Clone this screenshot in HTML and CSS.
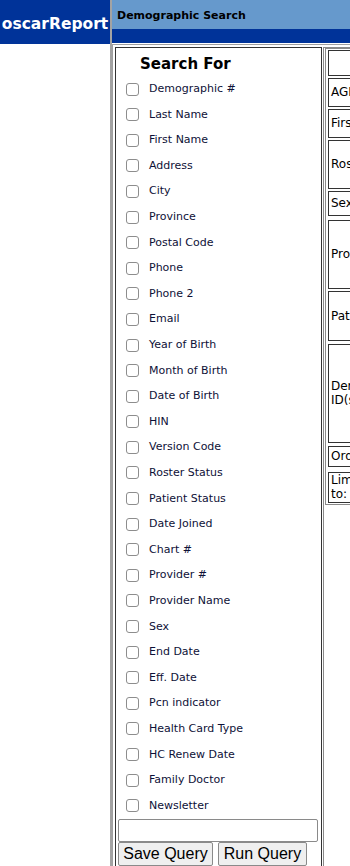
FILE: index.html
```html
<!DOCTYPE html>
<html>
<head>
<meta charset="utf-8">
<title>Demographic Search</title>
<link rel="stylesheet" href="styles.css">
</head>
<body>
<div class="page">
  <div class="leftcol">
    <div class="brand">oscarReport</div>
  </div>
  <div class="main">
    <div class="topbar">Demographic Search</div>
    <div class="topbar2"></div>
    <div class="content">
      <div class="searchcell">
        <div class="title">Search For</div>
        <ul class="fields">
          <li><input type="checkbox"><span>Demographic #</span></li>
          <li><input type="checkbox"><span>Last Name</span></li>
          <li><input type="checkbox"><span>First Name</span></li>
          <li><input type="checkbox"><span>Address</span></li>
          <li><input type="checkbox"><span>City</span></li>
          <li><input type="checkbox"><span>Province</span></li>
          <li><input type="checkbox"><span>Postal Code</span></li>
          <li><input type="checkbox"><span>Phone</span></li>
          <li><input type="checkbox"><span>Phone 2</span></li>
          <li><input type="checkbox"><span>Email</span></li>
          <li><input type="checkbox"><span>Year of Birth</span></li>
          <li><input type="checkbox"><span>Month of Birth</span></li>
          <li><input type="checkbox"><span>Date of Birth</span></li>
          <li><input type="checkbox"><span>HIN</span></li>
          <li><input type="checkbox"><span>Version Code</span></li>
          <li><input type="checkbox"><span>Roster Status</span></li>
          <li><input type="checkbox"><span>Patient Status</span></li>
          <li><input type="checkbox"><span>Date Joined</span></li>
          <li><input type="checkbox"><span>Chart #</span></li>
          <li><input type="checkbox"><span>Provider #</span></li>
          <li><input type="checkbox"><span>Provider Name</span></li>
          <li><input type="checkbox"><span>Sex</span></li>
          <li><input type="checkbox"><span>End Date</span></li>
          <li><input type="checkbox"><span>Eff. Date</span></li>
          <li><input type="checkbox"><span>Pcn indicator</span></li>
          <li><input type="checkbox"><span>Health Card Type</span></li>
          <li><input type="checkbox"><span>HC Renew Date</span></li>
          <li><input type="checkbox"><span>Family Doctor</span></li>
          <li><input type="checkbox"><span>Newsletter</span></li>
        </ul>
        <input class="qname" type="text">
        <div class="buttons">
          <button class="btn save">Save Query</button>
          <button class="btn run">Run Query</button>
        </div>
      </div>
      <div class="fieldcell">
        <div class="crit">
          <div class="box b-top"></div>
          <div class="box b-age">AGE</div>
          <div class="box b-first">First Name</div>
          <div class="box b-roster">Roster Status</div>
          <div class="box b-sex">Sex</div>
          <div class="box b-prov">Provider No</div>
          <div class="box b-pat">Patient Status</div>
          <div class="box b-dem">Demographic<br>ID(s)</div>
          <div class="box b-ord">Order By</div>
          <div class="box b-lim">Limit<br>to:</div>
        </div>
      </div>
    </div>
  </div>
</div>
</body>
</html>
```
FILE: styles.css
```css
html, body {
  margin: 0;
  padding: 0;
  background: #ffffff;
}
body {
  font-family: "DejaVu Sans", Verdana, sans-serif;
  font-size: 11px;
  color: #000000;
}
.page {
  display: flex;
  width: 350px;
  height: 866px;
  overflow: hidden;
}
.leftcol {
  flex: 0 0 110px;
  border-right: 2px solid #a3a3a3;
  background: #ffffff;
}
.brand {
  height: 44px;
  background: #003399;
  color: #ffffff;
  font-weight: bold;
  font-size: 15.5px;
  line-height: 49px;
  text-align: center;
  white-space: nowrap;
  overflow: hidden;
}
.main {
  flex: 1 1 auto;
  min-width: 0;
  display: flex;
  flex-direction: column;
}
.topbar {
  height: 29px;
  background: #6699cc;
  font-weight: bold;
  font-size: 11px;
  padding-left: 5px;
  box-sizing: border-box;
  line-height: 32px;
  white-space: nowrap;
}
.topbar2 {
  height: 14px;
  background: #003399;
}
.content {
  margin-top: 1px;
  display: flex;
  align-items: stretch;
  border-top: 1px solid #a0a0a0;
  border-left: 1px solid #a0a0a0;
  padding: 2px 0 0 2px;
  flex: 1 1 auto;
  min-width: 0;
}
.searchcell {
  flex: 0 0 203px;
  border: 1px solid #333333;
  border-bottom: none;
  padding: 0 1px;
}
.title {
  height: 28px;
  padding-left: 23px;
  font-weight: bold;
  font-size: 15px;
  line-height: 32px;
  color: #000000;
}
.fields {
  list-style: none;
  margin: 0;
  padding: 0;
}
.fields li {
  height: 25.6px;
  display: flex;
  align-items: center;
  padding-left: 8px;
  color: #0e1137;
}
.fields input[type=checkbox] {
  appearance: none;
  -webkit-appearance: none;
  width: 13px;
  height: 13px;
  margin: 1px 10px 0 1px;
  border: 1px solid #8d8d8d;
  border-radius: 3px;
  background: #ffffff;
  box-sizing: border-box;
}
.fields span {
  font-size: 11px;
  line-height: 13px;
}
.qname {
  display: block;
  box-sizing: border-box;
  width: 200px;
  height: 23px;
  margin: 1px 0 0 1px;
  border: 1px solid #8a8a8a;
  border-radius: 2px;
  padding: 0;
  background: #ffffff;
}
.buttons {
  display: flex;
  gap: 5px;
  margin-left: 1px;
}
.btn {
  font-family: "Liberation Sans", Arial, sans-serif;
  font-size: 16px;
  color: #000000;
  background: #efefef;
  border: 1px solid #8a8a8a;
  border-radius: 2px;
  height: 24px;
  padding: 0;
  line-height: 20px;
  white-space: nowrap;
  flex: 0 0 auto;
}
.save { width: 95px; }
.run { width: 89px; }
.fieldcell {
  flex: 1 1 auto;
  min-width: 0;
  margin-left: 1px;
  border-left: 1px solid #8a8a8a;
  border-top: 1px solid #8a8a8a;
  padding-left: 1px;
}
.crit {
  border-left: 1px solid #8a8a8a;
  border-top: 1px solid #8a8a8a;
  border-bottom: 1px solid #8a8a8a;
  padding: 1px 0 1px 2px;
  display: flex;
  flex-direction: column;
  gap: 2px;
}
.box {
  border: 1px solid #333333;
  border-right: none;
  font-size: 12px;
  line-height: 14px;
  padding-left: 2px;
  white-space: nowrap;
  overflow: hidden;
  display: flex;
  flex-direction: column;
  justify-content: center;
  box-sizing: border-box;
}
.b-top { height: 26px; }
.b-age { height: 29px; }
.b-first { height: 29px; }
.b-roster { height: 49px; }
.b-sex { height: 25px; margin-bottom: 2px; }
.b-prov { height: 69px; }
.b-pat { height: 50px; }
.b-dem { height: 99px; margin-top: 1px; }
.b-ord { height: 21px; margin-top: 1px; }
.b-lim { height: 31px; margin-top: 3px; }
```
